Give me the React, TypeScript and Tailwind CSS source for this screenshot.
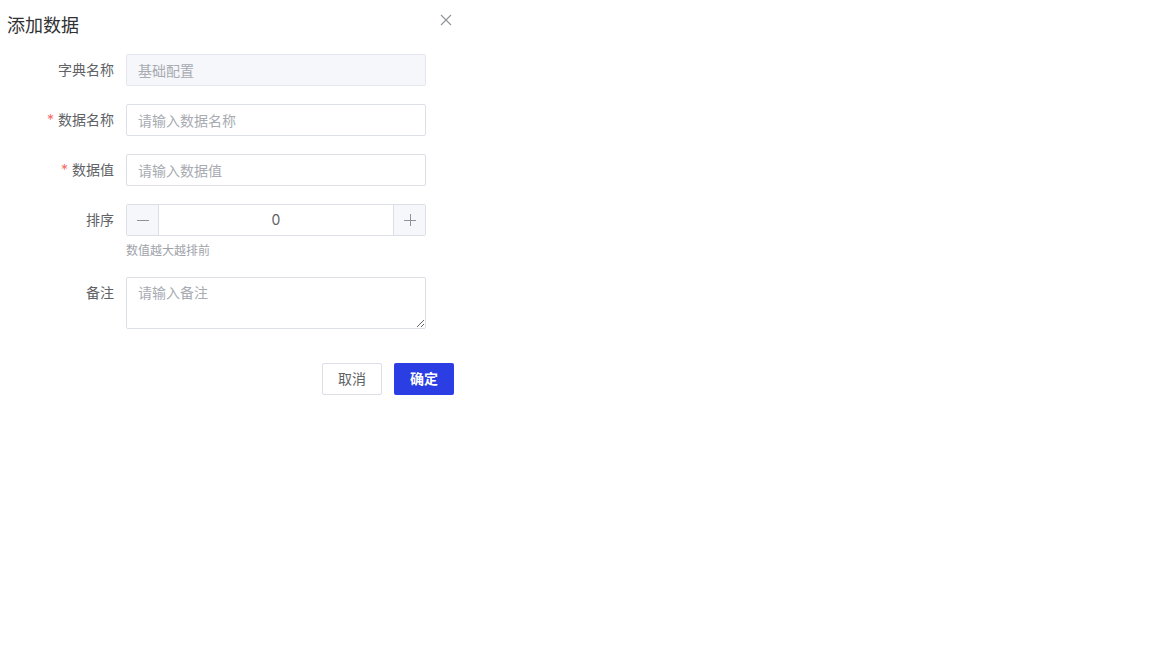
import { useState } from 'react';

const font = "font-['Inter','Noto_Sans_CJK_SC',sans-serif]";

const Label = ({ text, required }: { text: string; required?: boolean }) => (
  <label className="w-[126px] shrink-0 pr-3 text-right text-sm leading-8 text-[#606266]">
    {required && <span className="mr-1 text-[#f56c6c]">*</span>}
    {text}
  </label>
);

export default function App() {
  const [sort, setSort] = useState(0);

  return (
    <div className={`${font} min-h-screen bg-white`}>
      <div className="w-[460px]">
        {/* Header */}
        <div className="flex items-start justify-between pl-[7px] pr-[8px] pt-[14px]">
          <h2 className="text-lg leading-6 text-[#303133]">添加数据</h2>
          <button className="text-[#909399]">
            <svg width="12" height="12" viewBox="0 0 12 12" fill="none" stroke="currentColor" strokeWidth="1.1">
              <path d="M1 1l10 10M11 1L1 11" />
            </svg>
          </button>
        </div>

        {/* Form */}
        <div className="mt-[16px] flex flex-col gap-[18px]">
          <div className="flex">
            <Label text="字典名称" />
            <input
              disabled
              value="基础配置"
              className="h-8 w-[300px] rounded-[2px] border border-[#e4e7ed] bg-[#f5f7fa] px-[11px] text-sm text-[#a8abb2] outline-none"
            />
          </div>
          <div className="flex">
            <Label text="数据名称" required />
            <input
              placeholder="请输入数据名称"
              className="h-8 w-[300px] rounded-[2px] border border-[#dcdfe6] px-[11px] text-sm text-[#606266] outline-none placeholder:text-[#a8abb2]"
            />
          </div>
          <div className="flex">
            <Label text="数据值" required />
            <input
              placeholder="请输入数据值"
              className="h-8 w-[300px] rounded-[2px] border border-[#dcdfe6] px-[11px] text-sm text-[#606266] outline-none placeholder:text-[#a8abb2]"
            />
          </div>
          <div className="flex">
            <Label text="排序" />
            <div>
              <div className="flex h-8 w-[300px] rounded-[2px] border border-[#dcdfe6]">
                <button
                  onClick={() => setSort(sort - 1)}
                  className="flex w-8 items-center justify-center border-r border-[#dcdfe6] bg-[#f5f7fa] text-[#909399]"
                >
                  <svg width="14" height="14" viewBox="0 0 14 14" stroke="currentColor" strokeWidth="1">
                    <path d="M1 7.5h12" />
                  </svg>
                </button>
                <div className="flex flex-1 items-center justify-center text-sm text-[#606266]">{sort}</div>
                <button
                  onClick={() => setSort(sort + 1)}
                  className="flex w-8 items-center justify-center border-l border-[#dcdfe6] bg-[#f5f7fa] text-[#909399]"
                >
                  <svg width="14" height="14" viewBox="0 0 14 14" stroke="currentColor" strokeWidth="1">
                    <path d="M1 7.5h12M7.5 1v12" />
                  </svg>
                </button>
              </div>
              <p className="mt-[5px] text-xs leading-5 text-[#a0a3aa]">数值越大越排前</p>
            </div>
          </div>
          <div className="-mt-[2px] flex">
            <Label text="备注" />
            <textarea
              placeholder="请输入备注"
              className="h-[52px] w-[300px] rounded-[2px] border border-[#dcdfe6] px-[11px] py-[5px] text-sm leading-5 text-[#606266] outline-none placeholder:text-[#a8abb2]"
            />
          </div>
        </div>

        {/* Footer */}
        <div className="mt-[34px] flex justify-end gap-3 pr-[6px]">
          <button className="h-8 w-[60px] rounded-[2px] border border-[#dcdfe6] bg-white text-sm text-[#606266]">
            取消
          </button>
          <button className="h-8 w-[60px] rounded-[2px] bg-[#2a3ee3] text-sm font-semibold text-white">
            确定
          </button>
        </div>
      </div>
    </div>
  );
}
